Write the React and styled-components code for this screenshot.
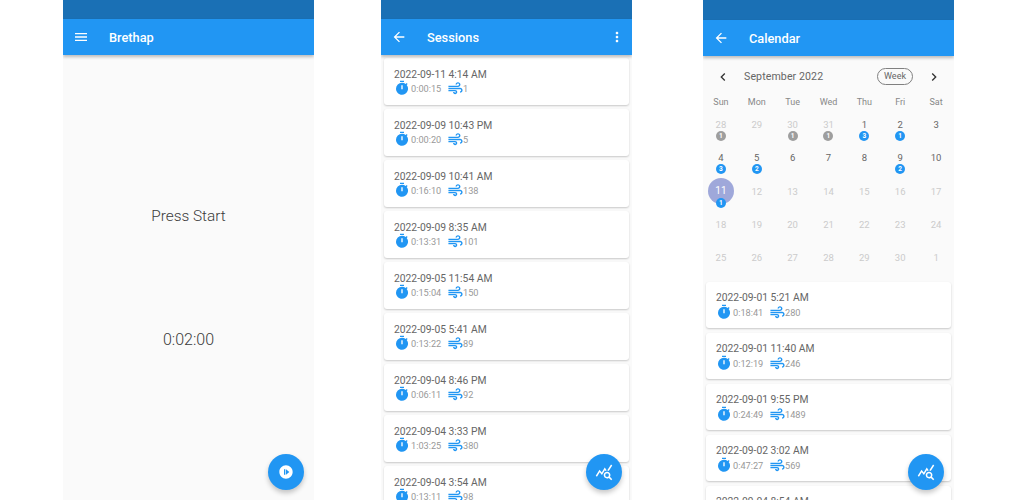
import React from "react";
import styled, { createGlobalStyle } from "styled-components";
import {
  MdMenu, MdArrowBack, MdMoreVert, MdTimer, MdAir, MdNotStarted, MdQueryStats, MdChevronLeft, MdChevronRight,
} from "react-icons/md";

const Global = createGlobalStyle`
  html, body { margin: 0; padding: 0; background: #fff; }
  body { font-family: Roboto, "Liberation Sans", sans-serif; width: 1024px; height: 500px; overflow: hidden; }
`;

const Stage = styled.div`
  display: flex;
  align-items: flex-start;
  height: 500px;
  padding-left: 63px;
`;
const Phone = styled.section`
  position: relative;
  flex: 0 0 251px;
  height: 500px;
  margin-left: ${(p) => p.$offset || 0}px;
  background: #fafafa;
  overflow: hidden;
  display: flex;
  flex-direction: column;
`;
const StatusBar = styled.div`
  flex: 0 0 ${(p) => p.$h}px;
  background: #1a70b5;
`;
const AppBar = styled.header`
  position: relative;
  z-index: 2;
  flex: 0 0 36px;
  display: flex;
  align-items: center;
  padding: 0 7px 0 10px;
  background: #2196f3;
  color: #fff;
  box-shadow: 0 2px 3px rgba(0, 0, 0, 0.25);
`;
const Title = styled.h1`
  flex: 1;
  margin: 0 0 0 20px;
  font-size: 12.8px;
  font-weight: 500;
`;
const Main = styled.main`
  flex: 1;
  display: flex;
  flex-direction: column;
  align-items: center;
  padding-top: 152px;
  gap: 106px;
  color: #3a3a3a;
  font-weight: 300;
`;
const Line = styled.div`
  line-height: 18px;
  font-size: ${(p) => p.$size}px;
`;
const Fab = styled.button`
  position: absolute;
  z-index: 3;
  right: 10px;
  bottom: 10px;
  width: 36px;
  height: 36px;
  border: 0;
  padding: 0;
  border-radius: 50%;
  background: #2196f3;
  color: #fff;
  display: flex;
  align-items: center;
  justify-content: center;
  box-shadow: 0 3px 5px rgba(0, 0, 0, 0.22);
`;
const List = styled.div`
  display: flex;
  flex-direction: column;
  gap: ${(p) => p.$gap}px;
  padding: ${(p) => p.$pad};
`;
const Card = styled.article`
  flex: 0 0 ${(p) => p.$h}px;
  box-sizing: border-box;
  padding: ${(p) => p.$top}px 10px 0;
  background: #fff;
  border-radius: 3px;
  box-shadow: 0 1px 2px rgba(0, 0, 0, 0.2);
`;
const DateText = styled.div`
  font-size: 10.3px;
  line-height: 13px;
  color: #666;
`;
const Meta = styled.div`
  display: flex;
  align-items: center;
  height: 14px;
  margin-top: ${(p) => p.$gap}px;
  font-size: 9.2px;
  color: #999;
  svg { color: #2196f3; flex: none; }
`;
const Dur = styled.span`
  width: 36px;
  margin-left: 1px;
`;
const Count = styled.span`
  margin-left: -1px;
`;
const CalHeader = styled.div`
  display: flex;
  align-items: center;
  height: 22px;
  margin-top: 10px;
  padding: 2px 12px 0;
  color: #333;
`;
const Month = styled.div`
  flex: 1;
  margin-left: 13px;
  font-size: 10.6px;
  color: #666;
  letter-spacing: 0.1px;
`;
const Pill = styled.div`
  width: 36px;
  height: 17px;
  box-sizing: border-box;
  border: 1px solid #808080;
  border-radius: 9px;
  font-size: 9px;
  line-height: 15px;
  text-align: center;
  color: #666;
  margin-right: 13px;
`;
const Grid = styled.div`
  display: grid;
  grid-template-columns: repeat(7, 1fr);
  grid-auto-rows: 33.3px;
`;
const Dow = styled.div`
  height: 27px;
  line-height: 20px;
  padding-top: 7px;
  box-sizing: border-box;
  text-align: center;
  font-size: 9px;
  color: #888;
`;
const Head = styled.div`
  display: grid;
  grid-template-columns: repeat(7, 1fr);
`;
const Day = styled.div`
  position: relative;
  display: flex;
  justify-content: center;
  padding-top: 7px;
  font-size: 9.5px;
  line-height: 12px;
  color: ${(p) => (p.$dim ? "#cbcbcb" : "#666")};
`;
const Selected = styled.div`
  position: absolute;
  top: -1px;
  left: 50%;
  margin-left: -13px;
  width: 26px;
  height: 26px;
  border-radius: 50%;
  background: #9fa8da;
  color: #fff;
  display: flex;
  align-items: center;
  justify-content: center;
  font-size: 10px;
`;
const Badge = styled.div`
  position: absolute;
  z-index: 1;
  top: 19px;
  left: 50%;
  margin-left: -5px;
  width: 10px;
  height: 10px;
  border-radius: 50%;
  background: ${(p) => (p.$grey ? "#9e9e9e" : "#2196f3")};
  color: #fff;
  font-size: 6.5px;
  font-weight: 700;
  line-height: 10px;
  text-align: center;
`;

const sessions = [
  ["2022-09-11 4:14 AM", "0:00:15", "1"],
  ["2022-09-09 10:43 PM", "0:00:20", "5"],
  ["2022-09-09 10:41 AM", "0:16:10", "138"],
  ["2022-09-09 8:35 AM", "0:13:31", "101"],
  ["2022-09-05 11:54 AM", "0:15:04", "150"],
  ["2022-09-05 5:41 AM", "0:13:22", "89"],
  ["2022-09-04 8:46 PM", "0:06:11", "92"],
  ["2022-09-04 3:33 PM", "1:03:25", "380"],
  ["2022-09-04 3:54 AM", "0:13:11", "98"],
];
const monthSessions = [
  ["2022-09-01 5:21 AM", "0:18:41", "280"],
  ["2022-09-01 11:40 AM", "0:12:19", "246"],
  ["2022-09-01 9:55 PM", "0:24:49", "1489"],
  ["2022-09-02 3:02 AM", "0:47:27", "569"],
  ["2022-09-04 8:54 AM", "0:13:11", "98"],
];
const dows = ["Sun", "Mon", "Tue", "Wed", "Thu", "Fri", "Sat"];
const days = [
  [28, 1, 1, 1], [29, 1], [30, 1, 1, 1], [31, 1, 1, 1], [1, 0, 3], [2, 0, 1], [3],
  [4, 0, 3], [5, 0, 2], [6], [7], [8], [9, 0, 2], [10],
  [11, 0, 1, 0, 1], [12, 1], [13, 1], [14, 1], [15, 1], [16, 1], [17, 1],
  [18, 1], [19, 1], [20, 1], [21, 1], [22, 1], [23, 1], [24, 1],
  [25, 1], [26, 1], [27, 1], [28, 1], [29, 1], [30, 1], [1, 1],
];

function Session({ item, h, top, gap }) {
  return (
    <Card $h={h} $top={top}>
      <DateText>{item[0]}</DateText>
      <Meta $gap={gap}>
        <MdTimer size={16} />
        <Dur>{item[1]}</Dur>
        <MdAir size={17} />
        <Count>{item[2]}</Count>
      </Meta>
    </Card>
  );
}

export default function App() {
  return (
    <>
      <Global />
      <Stage>
        <Phone>
          <StatusBar $h={19} />
          <AppBar>
            <MdMenu size={16} />
            <Title>Brethap</Title>
          </AppBar>
          <Main>
            <Line $size={15.4}>Press Start</Line>
            <Line $size={16}>0:02:00</Line>
          </Main>
          <Fab><MdNotStarted size={16} /></Fab>
        </Phone>
        <Phone $offset={67}>
          <StatusBar $h={19} />
          <AppBar>
            <MdArrowBack size={16} />
            <Title>Sessions</Title>
            <MdMoreVert size={16} />
          </AppBar>
          <List $gap={4} $pad="3px 3px 0">
            {sessions.map((s) => <Session key={s[0]} item={s} h={47} top={10} gap={0} />)}
          </List>
          <Fab><MdQueryStats size={18} /></Fab>
        </Phone>
        <Phone $offset={71}>
          <StatusBar $h={20} />
          <AppBar>
            <MdArrowBack size={16} />
            <Title>Calendar</Title>
          </AppBar>
          <CalHeader>
            <MdChevronLeft size={16} />
            <Month>September 2022</Month>
            <Pill>Week</Pill>
            <MdChevronRight size={16} />
          </CalHeader>
          <Head>{dows.map((d) => <Dow key={d}>{d}</Dow>)}</Head>
          <Grid>
            {days.map((d, i) => (
              <Day key={i} $dim={d[1]}>
                {d[4] ? <Selected>{d[0]}</Selected> : d[0]}
                {d[2] ? <Badge $grey={d[3]}>{d[2]}</Badge> : null}
              </Day>
            ))}
          </Grid>
          <List $gap={5} $pad="4px 3px 0">
            {monthSessions.map((s) => <Session key={s[0]} item={s} h={46} top={9} gap={1} />)}
          </List>
          <Fab><MdQueryStats size={18} /></Fab>
        </Phone>
      </Stage>
    </>
  );
}
